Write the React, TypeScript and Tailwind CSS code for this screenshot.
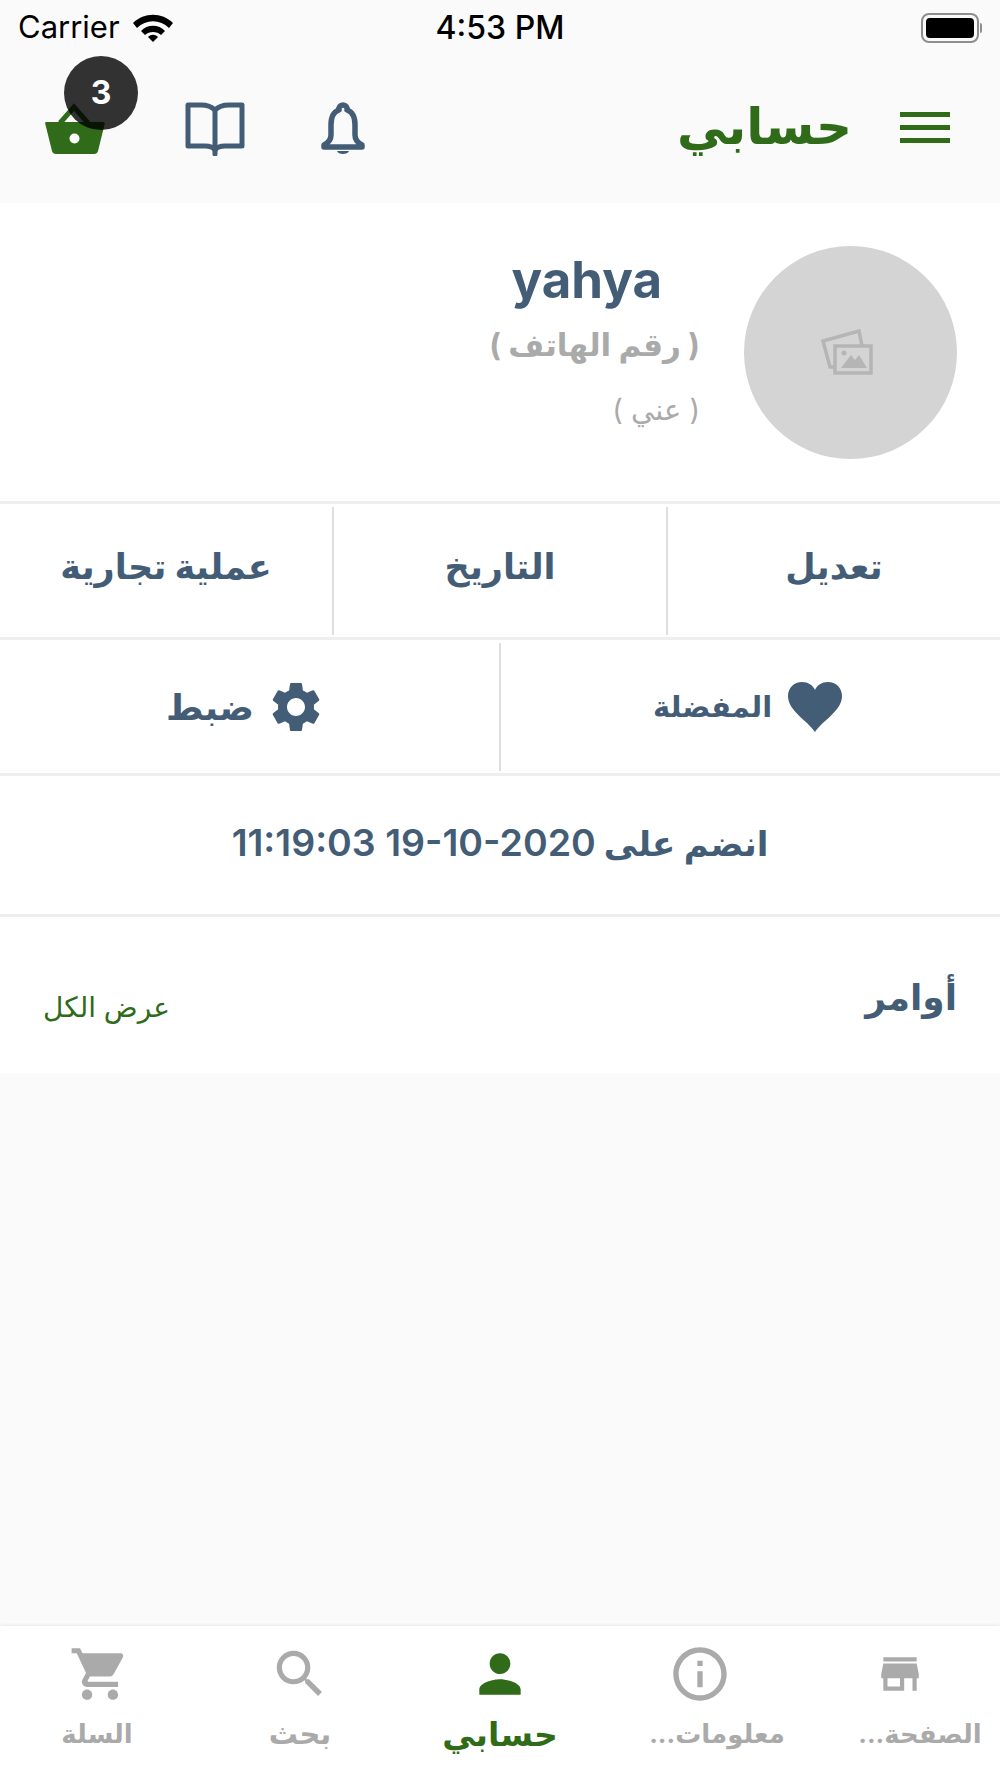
import { MdSettings, MdShoppingCart, MdSearch, MdPerson, MdInfoOutline, MdStore } from "react-icons/md";

function BasketIcon() {
  return (
    <svg width="60" height="52" viewBox="0 0 60 52" fill="none">
      <path d="M15 20 L29 4 L43 20" stroke="#2f6b18" strokeWidth="5" />
      <path d="M1 19 H58 C59 19 60 20 59.7 21 L53 48 C52.5 50 51 51 49 51 H11 C9 51 7.5 50 7 48 L0.3 21 C0 20 0 19 1 19 Z" fill="#2f6b18" />
      <circle cx="29.5" cy="35.5" r="5" fill="white" />
    </svg>
  );
}

function BookIcon() {
  return (
    <svg width="60" height="54" viewBox="0 0 60 54" fill="none" stroke="#435d77" strokeWidth="5">
      <path d="M30 8 C26 4 20 3 16 3 H3 V44 H20 C25 44 28 45 30 48 C32 45 35 44 40 44 H57 V3 H44 C40 3 34 4 30 8 Z" strokeLinejoin="round" />
      <path d="M30 8 V52" strokeLinecap="round" />
    </svg>
  );
}

function BellIcon() {
  return (
    <svg width="44" height="54" viewBox="0 0 44 54" fill="none">
      <path d="M22 3 a4 4 0 0 1 4 5 C32 10 34 15 34 23 V33 C34 38 37 41 41 43 V45 H3 V43 C7 41 10 38 10 33 V23 C10 15 12 10 18 8 a4 4 0 0 1 4 -5 Z" stroke="#435d77" strokeWidth="5.5" strokeLinejoin="round" />
      <path d="M16 49 H28 C27 53 17 53 16 49 Z" fill="#435d77" />
    </svg>
  );
}

function PhotosIcon() {
  return (
    <svg width="52" height="46" viewBox="0 0 52 46" fill="none" stroke="#b5b5b5" strokeWidth="3.5">
      <path d="M13 38 H9 L2 12 L38 2 L41 17" />
      <rect x="14" y="17" width="36" height="27" />
      <path d="M20 39 L30 26 L34 31 L38 26 L46 39 Z" fill="#b5b5b5" stroke="none" />
      <circle cx="23" cy="24" r="2.5" fill="#b5b5b5" stroke="none" />
    </svg>
  );
}

function WifiIcon() {
  return (
    <svg width="40" height="28" viewBox="0 0 40 28" fill="black">
      <path d="M0 9 C11 -2 29 -2 40 9 L36 14 C27 5 13 5 4 14 Z" />
      <path d="M8 17 C14 10 26 10 32 17 L28 21 C24 17 16 17 12 21 Z" />
      <path d="M15 23 C18 20 22 20 25 23 L20 28 Z" />
    </svg>
  );
}

function HeartIcon() {
  return (
    <svg width="54" height="50" viewBox="0 0 54 50" fill="#435d77">
      <path d="M27 50 C20 39 0 29 0 14 C0 6 6 0 14 0 C20 0 25 3 27 8 C29 3 34 0 40 0 C48 0 54 6 54 14 C54 29 34 39 27 50 Z" />
    </svg>
  );
}

const tabs = [
  { label: "الصفحة...", icon: <MdStore size={50} />, active: false, cls: "-mt-1 pl-[40px] text-[26px]" },
  { label: "معلومات...", icon: <MdInfoOutline size={64} />, active: false, cls: "pl-[34px] text-[26px]" },
  { label: "حسابي", icon: <MdPerson size={62} />, active: true, cls: "text-[33px]" },
  { label: "بحث", icon: <MdSearch size={62} />, active: false, cls: "text-[29px]" },
  { label: "السلة", icon: <MdShoppingCart size={62} />, active: false, cls: "pr-[6px] text-[26px]" },
];

export default function App() {
  return (
    <div dir="rtl" className="flex h-[1778px] w-[1000px] flex-col bg-[#fafafa] font-['Inter','DejaVu_Sans',sans-serif] text-[#435d77]">
      {/* Status bar */}
      <div dir="ltr" className="flex h-[50px] shrink-0 items-center justify-between px-[18px] pt-[5px] text-[31px] text-black">
        <div className="flex w-[300px] items-center gap-[13px]">
          <span>Carrier</span>
          <WifiIcon />
        </div>
        <span className="text-[32px] font-medium">4:53 PM</span>
        <div className="flex w-[300px] items-center justify-end">
          <div className="h-[30px] w-[58px] rounded-[8px] border-2 border-[#8e8e8e] p-[3px]">
            <div className="h-full rounded-[4px] bg-black"></div>
          </div>
          <div className="ml-[1px] h-[10px] w-[2px] rounded-r bg-[#8e8e8e]"></div>
        </div>
      </div>

      {/* Header */}
      <div className="flex h-[153px] shrink-0 items-center pr-[50px] pt-[2px]">
        <div className="flex w-[50px] shrink-0 flex-col gap-[8px]">
          <div className="h-[5px] bg-[#2f6b18]"></div>
          <div className="h-[5px] bg-[#2f6b18]"></div>
          <div className="h-[5px] bg-[#2f6b18]"></div>
        </div>
        <h1 className="mr-[48px] pb-[4px] text-[50px] font-bold leading-none text-[#2f6b18]">حسابي</h1>
        <div className="mr-auto flex items-center pt-[3px]">
          <BellIcon />
          <div className="mr-[76px]"><BookIcon /></div>
          <div className="relative ml-[45px] mr-[80px]">
            <BasketIcon />
            <div className="absolute bottom-[25px] left-[19px] flex h-[74px] w-[74px] items-center justify-center rounded-full bg-black/80 text-[32px] font-bold text-white">3</div>
          </div>
        </div>
      </div>

      {/* Profile */}
      <div className="flex h-[298px] shrink-0 items-center bg-white pr-[43px]">
        <div className="flex h-[213px] w-[213px] shrink-0 items-center justify-center rounded-full bg-[#d4d4d4] pr-[8px]">
          <PhotosIcon />
        </div>
        <div className="mr-[44px] -mt-[26px] flex flex-col items-start">
          <div className="mr-[38px] text-[51px] font-bold leading-[60px]">yahya</div>
          <div className="mt-[13px] text-[31px] font-bold leading-[44px] text-[#aaaaaa]">( رقم الهاتف )</div>
          <div className="mt-[25px] text-[29px] leading-[36px] text-[#aaaaaa]">( عني )</div>
        </div>
      </div>

      {/* Buttons */}
      <div className="h-[3px] shrink-0 bg-[#eeeeee]"></div>
      <div className="flex h-[133px] shrink-0 items-center bg-white text-[35px] font-bold">
        <div className="flex flex-1 justify-center pb-[9px]">تعديل</div>
        <div className="h-[128px] w-[2px] bg-[#dedede]"></div>
        <div className="flex flex-1 justify-center pb-[9px]">التاريخ</div>
        <div className="h-[128px] w-[2px] bg-[#dedede]"></div>
        <div className="flex flex-1 justify-center pb-[9px]">عملية تجارية</div>
      </div>
      <div className="h-[3px] shrink-0 bg-[#eeeeee]"></div>
      <div className="flex h-[133px] shrink-0 items-center bg-white font-bold">
        <div className="flex flex-1 items-center justify-center text-[29px]">
          <div className="mr-[6px] flex items-center gap-[16px]">
            <HeartIcon />
            <span>المفضلة</span>
          </div>
        </div>
        <div className="h-[128px] w-[2px] bg-[#dedede]"></div>
        <div className="flex flex-1 items-center justify-center text-[36px]">
          <div className="mr-[7px] flex items-center gap-[12px]">
            <MdSettings size={60} />
            <span>ضبط</span>
          </div>
        </div>
      </div>
      <div className="h-[3px] shrink-0 bg-[#eeeeee]"></div>

      {/* Joined date */}
      <div className="flex h-[138px] shrink-0 items-center justify-center gap-[8px] bg-white pb-[4px] font-semibold">
        <span className="text-[34px]">انضم على</span>
        <span dir="ltr" className="text-[37.5px]">11:19:03 19-10-2020</span>
      </div>
      <div className="h-[3px] shrink-0 bg-[#eeeeee]"></div>

      {/* Orders */}
      <div className="flex h-[156px] shrink-0 items-center justify-between bg-white px-[43px]">
        <span className="mt-[4px] text-[36px] font-bold">أوامر</span>
        <span className="mt-[24px] text-[28px] text-[#2f6b18]">عرض الكل</span>
      </div>

      <div className="flex-1"></div>

      {/* Tab bar */}
      <div className="flex h-[152px] shrink-0 bg-white shadow-[0_-1px_3px_rgba(0,0,0,0.07)]">
        {tabs.map((tab) => (
          <div
            key={tab.label}
            className={`flex w-[200px] flex-col items-center pt-[11px] ${tab.active ? "text-[#2f6b18]" : "text-[#aaaaaa]"}`}
          >
            <div className="flex h-[74px] items-center justify-center">{tab.icon}</div>
            <span className={`mt-[3px] whitespace-nowrap font-bold leading-[40px] ${tab.cls}`}>{tab.label}</span>
          </div>
        ))}
      </div>
    </div>
  );
}
